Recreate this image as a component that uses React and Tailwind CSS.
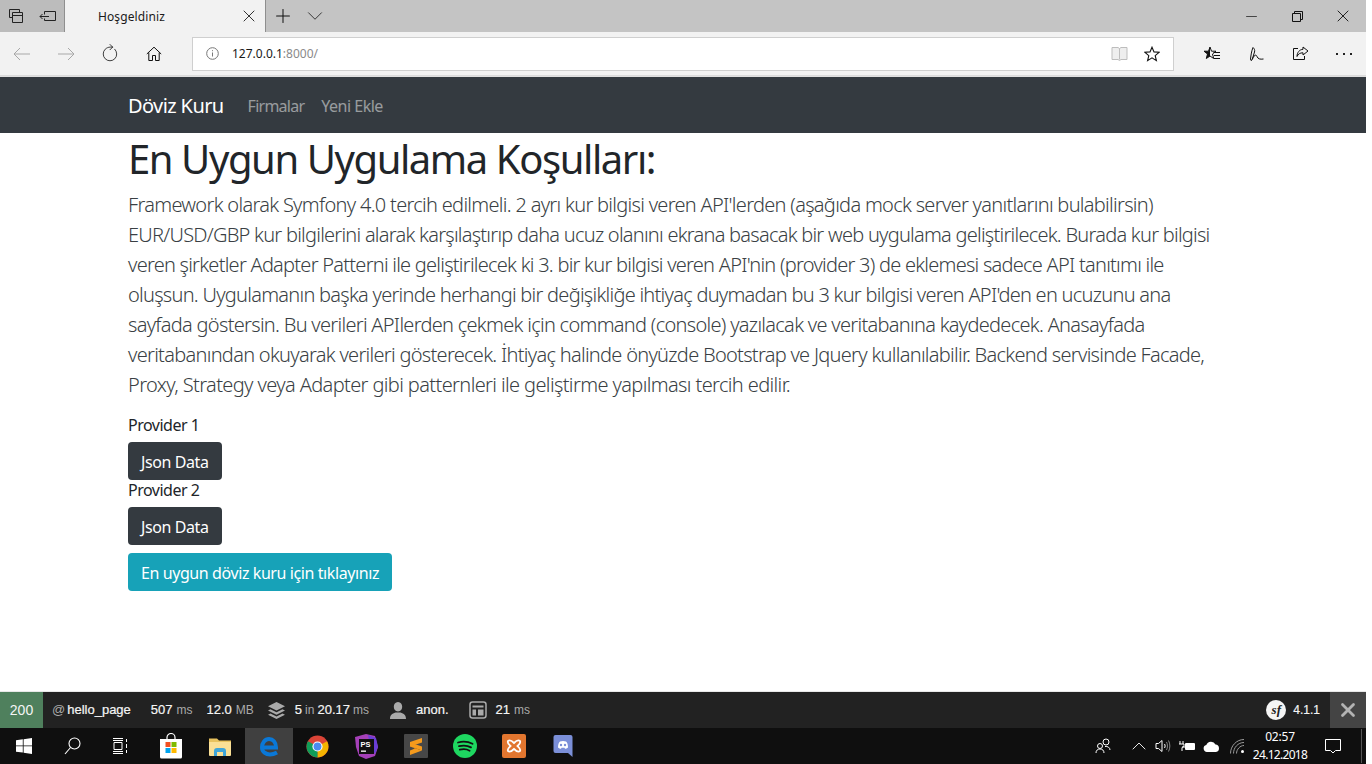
import { Minus, X, Plus, ChevronDown, ChevronUp, RotateCw } from "lucide-react";

const UI_FONT = "font-['Noto_Sans','Open_Sans',sans-serif]";

function Cell({ className = "", children }) {
  return <div className={`flex h-full shrink-0 items-center justify-center ${className}`}>{children}</div>;
}

function TabBar() {
  return (
    <div className="flex h-8 shrink-0 items-stretch bg-[#c4c4c4]">
      <div className="flex w-16 bg-[#bcbcbc]">
        <Cell className="w-8">
          <svg width="16" height="16" viewBox="0 0 16 16" fill="none" stroke="#222" strokeWidth="1">
            <path d="M1.5 1.5h10v3M1.5 1.5v8h2.5M4.5 4.5h10v10h-10zM4.5 7.5h10" />
          </svg>
        </Cell>
        <Cell className="w-8">
          <svg width="18" height="16" viewBox="0 0 18 16" fill="none" stroke="#222" strokeWidth="1">
            <path d="M5.5 3.5h11v9h-11v-2M5.5 3.5v3M1 8.5h9M3.5 6l-2.5 2.5 2.5 2.5" />
          </svg>
        </Cell>
      </div>
      <div className={`flex w-[202px] items-center justify-between border-x border-[#8f8f8f] bg-[#f2f2f2] pl-[33px] pr-[6px] text-[12px] text-[#1a1a1a] ${UI_FONT}`}>
        <span className="pt-px tracking-[0.1px]">Hoşgeldiniz</span>
        <X size={20} strokeWidth={1.2} color="#333" />
      </div>
      <Cell className="ml-[1px] w-[32px]">
        <Plus size={22} strokeWidth={1.1} color="#111" />
      </Cell>
      <Cell className="w-[32px]">
        <ChevronDown size={26} strokeWidth={0.9} color="#333" />
      </Cell>
      <div className="ml-auto flex">
        <Cell className="w-[46px]">
          <Minus size={17} strokeWidth={1} color="#111" />
        </Cell>
        <Cell className="w-[46px]">
          <svg width="11" height="11" viewBox="0 0 11 11" fill="none" stroke="#111" strokeWidth="1">
            <path d="M0.5 2.5h8v8h-8zM2.5 2.5v-2h8v8h-2" />
          </svg>
        </Cell>
        <Cell className="w-[46px]">
          <X size={20} strokeWidth={1.1} color="#111" />
        </Cell>
      </div>
    </div>
  );
}

function AddressBar() {
  return (
    <div className="flex h-[44px] shrink-0 items-center border-b border-[#dcdcdc] bg-[#f2f2f2]">
      <Cell className="w-11">
        <svg width="18" height="14" viewBox="0 0 18 14" fill="none" stroke="#a8a8a8" strokeWidth="1">
          <path d="M1 7h16M7 1L1 7l6 6" />
        </svg>
      </Cell>
      <Cell className="w-11">
        <svg width="18" height="14" viewBox="0 0 18 14" fill="none" stroke="#a8a8a8" strokeWidth="1">
          <path d="M1 7h16M11 1l6 6-6 6" />
        </svg>
      </Cell>
      <Cell className="w-11">
        <RotateCw size={18} strokeWidth={1} color="#111" className="-rotate-45" />
      </Cell>
      <Cell className="w-11">
        <svg width="16" height="16" viewBox="0 0 16 16" fill="none" stroke="#111" strokeWidth="1">
          <path d="M0.8 8L8 1.2 15.2 8M2.8 6.5v8h3.7v-5h3v5h3.7v-8" />
        </svg>
      </Cell>
      <div className="mx-4 flex h-[34px] flex-1 items-center border border-[#cfcfcf] bg-white">
        <svg className="ml-[13px]" width="13" height="13" viewBox="0 0 13 13" fill="none" stroke="#777" strokeWidth="1">
          <circle cx="6.5" cy="6.5" r="5.8" />
          <path d="M6.5 5.5v4M6.5 3.2v1" />
        </svg>
        <span className={`ml-[13px] pt-px text-[12px] text-[#1a1a1a] ${UI_FONT}`}>
          127.0.0.1<span className="text-[#8a8a8a]">:8000/</span>
        </span>
        <div className="ml-auto mr-[13px] flex items-center gap-[16px]">
          <svg width="17" height="15" viewBox="0 0 17 15" fill="#eee" stroke="#bdbdbd" strokeWidth="1">
            <path d="M1 1.5h6l1.5 1 1.5-1h6v12h-6l-1.5 1-1.5-1h-6zM8.5 2.5v11" />
          </svg>
          <svg width="16" height="16" viewBox="0 0 16 16" fill="none" stroke="#111" strokeWidth="1.1">
            <path d="M8 1.2l2 4.7 5 .4-3.800 3.300 1.200 5-4.400-2.700-4.400 2.700 1.200-5L1 6.300l5-.4z" />
          </svg>
        </div>
      </div>
      <Cell className="w-11">
        <svg width="16" height="15" viewBox="0 0 16 15" fill="none" stroke="#111" strokeWidth="1">
          <path d="M6 1l1.500 4.200H12L8.500 8l1.200 4.500L6 10l-3.700 2.500L3.500 8 0 5.200h4.500z" />
          <path d="M6 1L4.500 5.200H0L3.500 8l-1.200 4.500L6 10z" fill="#111" stroke="none" />
          <path d="M9.500 6.500H16M10 9.500h6M10 12.500h6" />
        </svg>
      </Cell>
      <Cell className="w-11">
        <svg width="16" height="16" viewBox="0 0 16 16" fill="none" stroke="#111" strokeWidth="1">
          <path d="M5 1.500c1.500 1.500 2 2.500 1.500 4.500L4 14l-1 .5-.5-1.500c.5-4 1-8 2.500-11.500z" />
          <path d="M4.500 13c1.500-4 3.500-5 4.500-2.500 1 2.500 3 3 6.500 2.500" />
        </svg>
      </Cell>
      <Cell className="w-11">
        <svg width="17" height="15" viewBox="0 0 17 15" fill="none" stroke="#111" strokeWidth="1">
          <path d="M6 2.500H1.500v11h11V10M11 1l5 4-5 4V6.800C8 6.800 6 8 5 10.500 5 6.500 7.500 3.500 11 3.300z" />
        </svg>
      </Cell>
      <Cell className="w-11">
        <div className="flex gap-[5px]">
          <span className="h-[2px] w-[2px] bg-[#222]" />
          <span className="h-[2px] w-[2px] bg-[#222]" />
          <span className="h-[2px] w-[2px] bg-[#222]" />
        </div>
      </Cell>
    </div>
  );
}

function Navbar() {
  return (
    <nav className={`flex h-[56px] shrink-0 items-center bg-[#343a40] pl-[128px] pt-[2px] ${UI_FONT}`}>
      <a className="text-[20px] tracking-[-0.6px] text-white">Döviz Kuru</a>
      <a className="ml-[24px] text-[16px] tracking-[-0.75px] text-white/50">Firmalar</a>
      <a className="ml-[17px] text-[16px] tracking-[-0.5px] text-white/50">Yeni Ekle</a>
    </nav>
  );
}

const LEAD_LINES = [
  { text: "Framework olarak Symfony 4.0 tercih edilmeli. 2 ayrı kur bilgisi veren API'lerden (aşağıda mock server yanıtlarını bulabilirsin)", tracking: "tracking-[-0.7px]" },
  { text: "EUR/USD/GBP kur bilgilerini alarak karşılaştırıp daha ucuz olanını ekrana basacak bir web uygulama geliştirilecek. Burada kur bilgisi", tracking: "tracking-[-0.75px]" },
  { text: "veren şirketler Adapter Patterni ile geliştirilecek ki 3. bir kur bilgisi veren API'nin (provider 3) de eklemesi sadece API tanıtımı ile", tracking: "tracking-[-0.75px]" },
  { text: "oluşsun. Uygulamanın başka yerinde herhangi bir değişikliğe ihtiyaç duymadan bu 3 kur bilgisi veren API'den en ucuzunu ana", tracking: "tracking-[-0.735px]" },
  { text: "sayfada göstersin. Bu verileri APIlerden çekmek için command (console) yazılacak ve veritabanına kaydedecek. Anasayfada", tracking: "tracking-[-0.71px]" },
  { text: "veritabanından okuyarak verileri gösterecek. İhtiyaç halinde önyüzde Bootstrap ve Jquery kullanılabilir. Backend servisinde Facade,", tracking: "tracking-[-0.71px]" },
  { text: "Proxy, Strategy veya Adapter gibi patternleri ile geliştirme yapılması tercih edilir.", tracking: "tracking-[-0.62px]" },
];

function Content() {
  return (
    <main className={`flex-1 pl-[128px] text-[#212529] ${UI_FONT}`}>
      <h1 className="pt-[2px] text-[40px] leading-[48px] tracking-[-1.42px]">En Uygun Uygulama Koşulları:</h1>
      <div className="mt-[7px] text-[20px] font-light leading-[30px] text-[#3a3f44]">
        {LEAD_LINES.map((line) => (
          <p key={line.text} className={`whitespace-nowrap ${line.tracking}`}>{line.text}</p>
        ))}
      </div>
      <p className="mt-[13px] text-[16px] leading-[24px] tracking-[-0.5px]">Provider 1</p>
      <button className="mt-[5px] block h-[38px] rounded-[4px] bg-[#343a40] px-[13px] pt-[2px] text-[16px] tracking-[-0.4px] text-white">
        Json Data
      </button>
      <p className="-mt-[2px] text-[16px] leading-[24px] tracking-[-0.5px]">Provider 2</p>
      <button className="mt-[5px] block h-[38px] rounded-[4px] bg-[#343a40] px-[13px] pt-[2px] text-[16px] tracking-[-0.4px] text-white">
        Json Data
      </button>
      <button className="mt-2 block h-[38px] rounded-[4px] bg-[#17a2b8] px-[13px] pt-[2px] text-[16px] tracking-[-0.41px] text-white">
        En uygun döviz kuru için tıklayınız
      </button>
    </main>
  );
}

function DebugToolbar() {
  return (
    <div className="flex h-[37px] shrink-0 items-stretch border-t border-[#e8e8e8] bg-[#222222] font-['Liberation_Sans',sans-serif] text-[13px] text-[#f5f5f5]">
      <div className="flex w-[43px] items-center justify-center bg-[#4f805d] text-[14px]">200</div>
      <div className="ml-[9px] flex items-center">
        <span className="text-[#aaaaaa]">@</span>
        <b className="ml-[2px] font-normal [-webkit-text-stroke:0.2px]">hello_page</b>
      </div>
      <div className="ml-[20px] flex items-center gap-[4px]">
        <span className="[-webkit-text-stroke:0.2px]">507</span><span className="text-[12px] text-[#aaaaaa]">ms</span>
      </div>
      <div className="ml-[14px] flex items-center gap-[4px]">
        <span className="[-webkit-text-stroke:0.2px]">12.0</span><span className="text-[12px] text-[#aaaaaa]">MB</span>
      </div>
      <div className="ml-[13px] flex items-center">
        <svg width="19" height="19" viewBox="0 0 19 19" fill="#aaaaaa">
          <path d="M9.500 1L18 5.300 9.500 9.600 1 5.300z" />
          <path d="M3.500 8.200L1 9.500l8.500 4.300L18 9.500l-2.500-1.300-6 3z" />
          <path d="M3.500 12.400L1 13.700 9.500 18 18 13.700l-2.500-1.300-6 3z" />
        </svg>
        <span className="ml-[9px] [-webkit-text-stroke:0.2px]">5</span>
        <span className="ml-[3px] text-[12px] text-[#aaaaaa]">in</span>
        <span className="ml-[3px] [-webkit-text-stroke:0.2px]">20.17</span>
        <span className="ml-[3px] text-[12px] text-[#aaaaaa]">ms</span>
      </div>
      <div className="ml-[20px] flex items-center">
        <svg width="18" height="19" viewBox="0 0 18 19" fill="#aaaaaa">
          <path d="M9 1c2.800 0 4.200 2.200 4.200 4.800S11.800 10.500 9 10.500 4.800 8.400 4.800 5.800 6.200 1 9 1zM1 18c0-3.800 2-5.500 5.500-6.500h5c3.500 1 5.500 2.700 5.500 6.500z" />
        </svg>
        <span className="ml-[9px] [-webkit-text-stroke:0.2px]">anon.</span>
      </div>
      <div className="ml-[20px] flex items-center">
        <svg width="18" height="18" viewBox="0 0 18 18" fill="none" stroke="#aaaaaa">
          <rect x="1" y="1" width="16" height="16" rx="2.500" strokeWidth="1.500" />
          <path d="M3.500 4.500h11v2h-11zM3.500 8.500h3.500v6h-3.500zM9 8.500h5.500v6H9z" fill="#aaaaaa" stroke="none" />
        </svg>
        <span className="ml-[9px] [-webkit-text-stroke:0.2px]">21</span>
        <span className="ml-[4px] text-[12px] text-[#aaaaaa]">ms</span>
      </div>
      <div className="ml-auto flex items-center">
        <span className="flex h-[20px] w-[20px] items-center justify-center rounded-full bg-[#f5f5f5] font-['Liberation_Serif',serif] text-[13px] font-bold italic text-[#222222]">
          sf
        </span>
        <span className="ml-[7px] text-[12px] [-webkit-text-stroke:0.2px]">4.1.1</span>
        <div className="ml-[10px] flex w-[36px] items-center justify-center self-stretch bg-[#444444]">
          <X size={22} strokeWidth={3} color="#b3b3b3" />
        </div>
      </div>
    </div>
  );
}

const TRAY = "flex h-full w-6 shrink-0 items-center justify-center";

function Taskbar() {
  return (
    <div className="flex h-[36px] shrink-0 items-stretch bg-[#0f0f0f]">
      <Cell className="w-12">
        <svg width="16" height="16" viewBox="0 0 16 16" fill="#fff">
          <path d="M0 2.300l6.800-1v6.200H0zM7.600 1.200L16 0v7.500H7.600zM0 8.300h6.800v6.300L0 13.700zM7.600 8.300H16V16l-8.400-1.200z" />
        </svg>
      </Cell>
      <Cell className="w-12">
        <svg width="17" height="18" viewBox="0 0 17 18" fill="none" stroke="#fff" strokeWidth="1.100">
          <circle cx="10.500" cy="6.500" r="5.500" />
          <path d="M6.500 10.500L1 17" />
        </svg>
      </Cell>
      <Cell className="w-12">
        <svg width="17" height="16" viewBox="0 0 17 16" fill="none" stroke="#fff" strokeWidth="1">
          <path d="M1 .5h10M1 15.500h10M1 13.500h10M1 2.500h10M2 4.500h8v7H2zM14.500 1v3M14.500 6v4M14.500 12v3" />
        </svg>
      </Cell>
      <Cell className="ml-[2px] w-[49px]">
        <svg width="24" height="26" viewBox="0 0 24 26">
          <path d="M8 6V4.500a4 4 0 018 0V6" fill="none" stroke="#fff" strokeWidth="1.200" />
          <path d="M1 6h22v18a1.500 1.500 0 01-1.500 1.500h-19A1.500 1.500 0 011 24z" fill="#fff" />
          <rect x="6.500" y="9" width="5" height="5" fill="#f25022" />
          <rect x="12.500" y="9" width="5" height="5" fill="#7fba00" />
          <rect x="6.500" y="15" width="5" height="5" fill="#00a4ef" />
          <rect x="12.500" y="15" width="5" height="5" fill="#ffb900" />
        </svg>
      </Cell>
      <Cell className="w-[49px]">
        <svg width="22" height="19" viewBox="0 0 22 19">
          <path d="M0 1.500h8l2 2h12v14.500H0z" fill="#e8c25e" />
          <path d="M0 5h22v13a1 1 0 01-1 1H1a1 1 0 01-1-1z" fill="#fadf95" />
          <path d="M5 19v-5a3 3 0 013-3h6a3 3 0 013 3v5h-3v-4H8v4z" fill="#3fa5d8" />
        </svg>
      </Cell>
      <Cell className="ml-px w-[48px] bg-[#404040]">
        <svg width="21" height="21" viewBox="0 0 21 21" fill="none" stroke="#0a78d7" strokeWidth="4">
          <path d="M3.500 11.500H17C17 6 14 3 10 3S3 7 3 11.500 7 18.500 11 18.500c2.300 0 4.300-.5 7-2" />
        </svg>
      </Cell>
      <Cell className="w-[49px]">
        <svg width="23" height="23" viewBox="0 0 24 24">
          <circle cx="12" cy="12" r="11.500" fill="#db4437" />
          <path d="M12 12L22 6.500A11.500 11.500 0 0112 23.500z" fill="#f4b400" />
          <path d="M12 12L12 23.500A11.500 11.500 0 012 6.500z" fill="#0f9d58" />
          <circle cx="12" cy="12" r="5.300" fill="#fff" />
          <circle cx="12" cy="12" r="4.100" fill="#4a8bf0" />
        </svg>
      </Cell>
      <Cell className="w-[49px]">
        <svg width="25" height="25" viewBox="0 0 25 25">
          <path d="M1 3l11-3 9 2 3 11-3 9-9 3-7-3-3-9z" fill="#a540b8" />
          <path d="M14 1l8 3 2 9-3 7-5-8z" fill="#6a3ed6" />
          <rect x="5" y="5" width="15" height="15" fill="#111" />
          <text x="6.500" y="13" fontSize="7.500" fontWeight="700" fill="#fff" fontFamily="Liberation Sans, sans-serif">PS</text>
          <rect x="7" y="16.500" width="5" height="1.300" fill="#fff" />
        </svg>
      </Cell>
      <Cell className="w-[49px]">
        <div className="flex h-[24px] w-[24px] items-center justify-center rounded-[1px] bg-[#474747]">
          <svg width="14" height="17" viewBox="0 0 14 17" fill="#f59a1c">
            <path d="M13 0v4.500L1 8.500V4zM1 8.500l12 4-12 4.500v-4.500l5-2z" />
            <path d="M13 8.500V12.500L1 8.500V4.500z" />
          </svg>
        </div>
      </Cell>
      <Cell className="w-[49px]">
        <svg width="24" height="24" viewBox="0 0 24 24">
          <circle cx="12" cy="12" r="12" fill="#1ed760" />
          <path d="M5 8.500c5-1.300 10-1 14.500 1.300M6 12.200c4.300-1.100 8.500-.8 12 1.200M6.800 15.700c3.500-.8 7-.6 9.800 1" fill="none" stroke="#111" strokeWidth="1.800" strokeLinecap="round" />
        </svg>
      </Cell>
      <Cell className="w-[49px]">
        <div className="flex h-[24px] w-[24px] items-center justify-center rounded-[2px] bg-[#e2762f]">
          <svg width="16" height="16" viewBox="0 0 16 16" fill="none" stroke="#fff" strokeWidth="1.800">
            <path d="M2 3c2-1.500 4 0 6 2 2-2 4-3.500 6-2 1 2-1 3.500-2.500 5 1.500 1.500 3.500 3 2.500 5-2 1.500-4 0-6-2-2 2-4 3.500-6 2-1-2 1-3.500 2.500-5C3 6.500 1 5 2 3z" />
          </svg>
        </div>
      </Cell>
      <Cell className="w-[49px]">
        <svg width="20" height="24" viewBox="0 0 20 24">
          <path d="M2.500 1h15A2 2 0 0119.500 3v20l-4.500-4H2.500a2 2 0 01-2-2V3a2 2 0 012-2z" fill="#7b8fd8" />
          <path d="M5 13.500c0-3 1-5.500 2-6 2-.8 4-.8 6 0 1 .5 2 3 2 6-1 1-2 1.300-3 1.300l-.5-1h-3l-.5 1c-1 0-2-.3-3-1.300z" fill="#fff" />
          <circle cx="8" cy="11" r="1.200" fill="#7b8fd8" />
          <circle cx="12" cy="11" r="1.200" fill="#7b8fd8" />
        </svg>
      </Cell>

      <div className="ml-auto flex">
        <div className={TRAY}>
          <svg width="16" height="16" viewBox="0 0 16 16" fill="none" stroke="#fff" strokeWidth="1">
            <circle cx="11" cy="4" r="3" />
            <circle cx="5" cy="8" r="2.500" />
            <path d="M1 15c0-2.500 1.500-4 4-4s4 1.500 4 4M10 8.500c2.500-.5 5 1 5 3.500" />
          </svg>
        </div>
        <div className={`ml-[12px] ${TRAY}`}>
          <ChevronUp size={24} strokeWidth={0.9} color="#fff" />
        </div>
        <div className={TRAY}>
          <svg width="16" height="14" viewBox="0 0 16 14" fill="none" stroke="#fff" strokeWidth="1">
            <path d="M1 4.500h2.500L7 1.500v11l-3.500-3H1zM9.500 5c.8 1.200.8 2.800 0 4" />
            <path d="M11.500 3c1.300 2.300 1.300 5.700 0 8M13.500 1.500c1.800 3.300 1.800 7.700 0 11" stroke="#888" />
          </svg>
        </div>
        <div className={TRAY}>
          <svg width="16" height="13" viewBox="0 0 16 13" fill="#fff">
            <rect x="6" y="3" width="10" height="7" rx="1" />
            <path d="M1 1v3M4 1v3M0 4h5v2.500L3 7.500V11M3 7h3" stroke="#fff" strokeWidth="1" fill="none" />
          </svg>
        </div>
        <div className={TRAY}>
          <svg width="17" height="11" viewBox="0 0 17 11" fill="#fff">
            <path d="M4 11a3.500 3.500 0 01-.7-6.900A5 5 0 0112.500 3.500 3.800 3.800 0 0113 11z" />
          </svg>
        </div>
        <div className={`ml-[2px] ${TRAY}`}>
          <svg width="15" height="15" viewBox="0 0 15 15" fill="none" stroke="#9a9a9a" strokeWidth="1">
            <path d="M.5 14.500C.5 7 6.500.5 14 .5M3.500 14.500c0-6 4.500-11 10.500-11M6.500 14.500c0-4 3.500-8 7.500-8" />
            <circle cx="12.500" cy="12.500" r="1.500" fill="#fff" stroke="none" />
          </svg>
        </div>
        <div className={`flex w-[62px] flex-col items-center justify-center text-[12px] leading-[18px] text-white ${UI_FONT}`}>
          <span className="tracking-[-0.2px]">02:57</span>
          <span className="tracking-[-0.7px]">24.12.2018</span>
        </div>
        <Cell className="ml-[8px] w-[28px]">
          <svg width="16" height="16" viewBox="0 0 16 16" fill="none" stroke="#fff" strokeWidth="1">
            <path d="M.5 1.500h15v11h-5l-2.500 2.500-2.500-2.500h-5z" />
          </svg>
        </Cell>
        <div className="ml-[14px] mr-[4px] my-[1px] w-px bg-[#555555]" />
      </div>
    </div>
  );
}

export default function App() {
  return (
    <div className="flex h-[764px] w-[1366px] flex-col overflow-hidden bg-white">
      <TabBar />
      <AddressBar />
      <div className="h-px shrink-0 bg-[#e0e0e0]" />
      <Navbar />
      <Content />
      <DebugToolbar />
      <Taskbar />
    </div>
  );
}
